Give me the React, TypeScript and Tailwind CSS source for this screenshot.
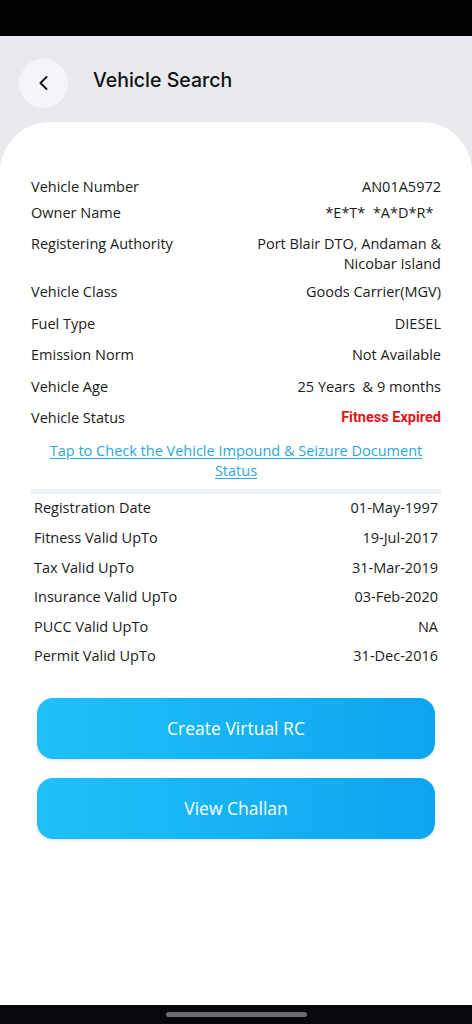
import React from "react";

const Row = ({ label, value, className = "", valueClass = "" }: { label: string; value: React.ReactNode; className?: string; valueClass?: string }) => (
  <div className={`flex justify-between items-start leading-[20px] ${className}`}>
    <span className="text-[14.5px] text-[#1b1b1b]">{label}</span>
    <span className={`text-[14.5px] text-right whitespace-pre ${valueClass || "text-[#1b1b1b]"}`}>{value}</span>
  </div>
);

export default function App() {
  return (
    <div className="w-[472px] h-[1024px] flex flex-col bg-[#e9eaef] overflow-hidden" style={{ fontFamily: '"Open Sans", "Noto Sans", sans-serif' }}>
      <div className="h-[36px] bg-black shrink-0" />
      <div className="h-[86px] shrink-0 flex items-center pl-[19px]">
        <div className="w-[49px] h-[49px] rounded-full bg-[#f4f5f8] flex items-center justify-center mt-[8px]">
          <svg width="14" height="16" viewBox="0 0 14 16" fill="none">
            <path d="M9.5 2 L3.5 8 L9.5 14" stroke="#1a1a1a" strokeWidth="2" strokeLinecap="round" strokeLinejoin="round" />
          </svg>
        </div>
        <div className="ml-[25px] text-[19.5px] font-medium text-[#111] mt-[4px]" style={{ fontFamily: 'Inter, "Noto Sans", sans-serif' }}>
          Vehicle Search
        </div>
      </div>
      <div className="flex-1 bg-white rounded-t-[50px] px-[31px] pt-[55px] flex flex-col">
        <Row label="Vehicle Number" value="AN01A5972" />
        <Row label="Owner Name" value={"*E*T*  *A*D*R*  "} className="mt-[6px]" />
        <Row label="Registering Authority" value={"Port Blair DTO, Andaman &\nNicobar Island"} className="mt-[11px]" />
        <Row label="Vehicle Class" value="Goods Carrier(MGV)" className="mt-[8px]" />
        <Row label="Fuel Type" value="DIESEL" className="mt-[12px]" />
        <Row label="Emission Norm" value="Not Available" className="mt-[11px]" />
        <Row label="Vehicle Age" value="25 Years  & 9 months" className="mt-[12px]" />
        <div className="flex justify-between items-start leading-[20px] mt-[11px]">
          <span className="text-[14.5px] text-[#1b1b1b]">Vehicle Status</span>
          <span className="text-[14.5px] font-bold text-[#e3131b]" style={{ fontFamily: 'Roboto, sans-serif' }}>Fitness Expired</span>
        </div>
        <div className="mt-[13px] text-center text-[14.5px] leading-[20px] text-[#2ba8dc] underline underline-offset-2 px-[12px]">
          Tap to Check the Vehicle Impound &amp; Seizure Document Status
        </div>
        <div className="mt-[8px] h-[5px] bg-[#eef3f5]" />
        <div className="px-[3px] flex flex-col">
          <Row label="Registration Date" value="01-May-1997" className="mt-[4px]" />
          <Row label="Fitness Valid UpTo" value="19-Jul-2017" className="mt-[10px]" />
          <Row label="Tax Valid UpTo" value="31-Mar-2019" className="mt-[10px]" />
          <Row label="Insurance Valid UpTo" value="03-Feb-2020" className="mt-[9px]" />
          <Row label="PUCC Valid UpTo" value="NA" className="mt-[10px]" />
          <Row label="Permit Valid UpTo" value="31-Dec-2016" className="mt-[9px]" />
        </div>
        <div className="mx-[6px] mt-[32px] flex flex-col gap-[19px]">
          <button className="h-[61px] rounded-[16px] bg-gradient-to-r from-[#1fc1fa] to-[#0da5ef] text-white text-[17.5px] shadow-[0_1px_3px_rgba(0,0,0,0.12)]">
            Create Virtual RC
          </button>
          <button className="h-[61px] rounded-[16px] bg-gradient-to-r from-[#1fc1fa] to-[#0da5ef] text-white text-[17.5px] shadow-[0_1px_3px_rgba(0,0,0,0.12)]">
            View Challan
          </button>
        </div>
      </div>
      <div className="h-[19px] bg-[#08070b] shrink-0 flex justify-center pt-[7px]">
        <div className="w-[141px] h-[5px] rounded-full bg-[#6b6a70]" />
      </div>
    </div>
  );
}
